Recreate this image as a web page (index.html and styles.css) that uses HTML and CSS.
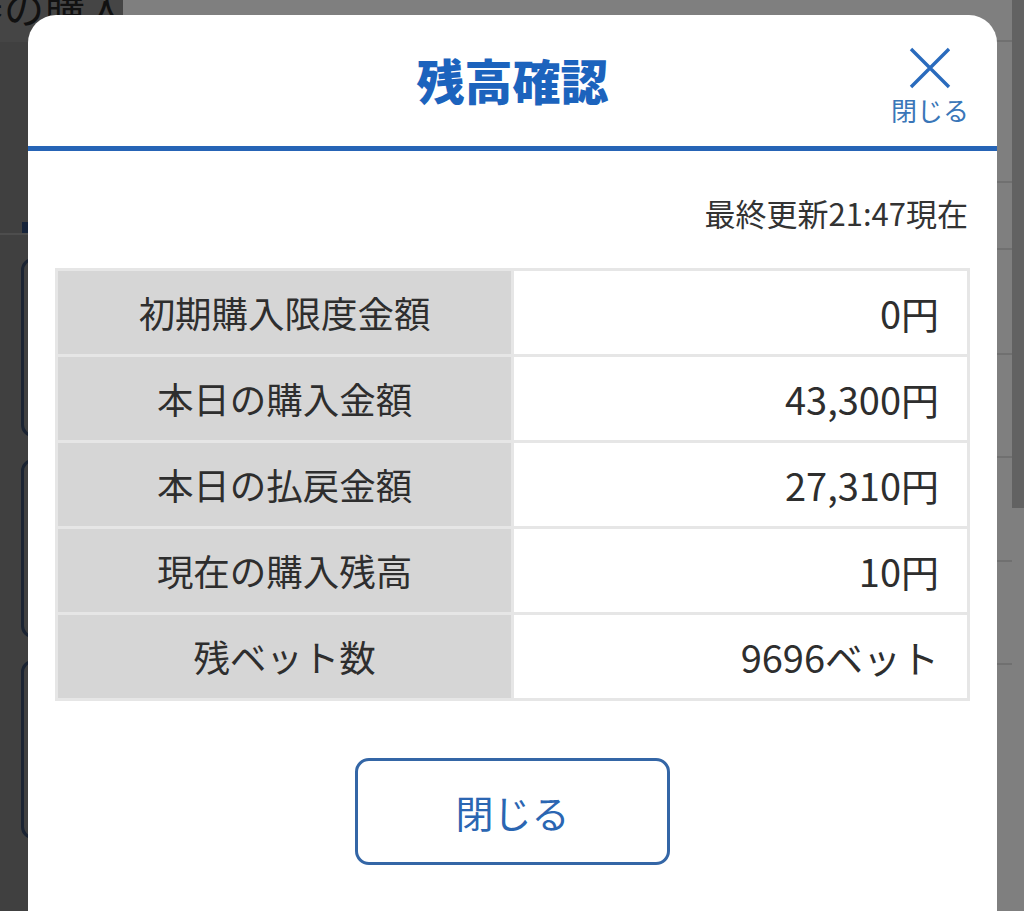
FILE: index.html
```html
<!DOCTYPE html>
<html lang="ja">
<head>
<meta charset="utf-8">
<title>残高確認</title>
<link rel="stylesheet" href="styles.css">
</head>
<body>
<div class="page">
  <div class="crumb"><span class="crumb-text">券の購入</span></div>
  <div class="left-strip">
    <div class="strip-mark"></div>
    <div class="strip-line"></div>
    <div class="strip-card"></div>
    <div class="strip-card"></div>
    <div class="strip-card"></div>
  </div>
  <div class="right-strip">
    <div class="rs-lines">
      <div class="rs-row rs-h42"></div>
      <div class="rs-row rs-h139"></div>
      <div class="rs-row rs-h65"></div>
      <div class="rs-row rs-h103"></div>
      <div class="rs-row rs-h101"></div>
      <div class="rs-row rs-h102"></div>
      <div class="rs-row rs-h101"></div>
    </div>
    <div class="rs-dark"></div>
  </div>
</div>

<div class="modal" role="dialog" aria-labelledby="modal-title">
  <div class="modal-header">
    <h1 class="modal-title" id="modal-title">残高確認</h1>
    <button class="close-x" type="button">
      <svg class="close-icon" width="44" height="42" viewBox="0 0 44 42" aria-hidden="true">
        <path d="M3 2 L41 40 M41 2 L3 40" stroke="currentColor" stroke-width="3.4" fill="none" stroke-linecap="butt"/>
      </svg>
      <span class="close-label">閉じる</span>
    </button>
  </div>
  <div class="modal-body">
    <p class="updated">最終更新21:47現在</p>
    <table class="balance">
      <tr><th>初期購入限度金額</th><td>0円</td></tr>
      <tr><th>本日の購入金額</th><td>43,300円</td></tr>
      <tr><th>本日の払戻金額</th><td>27,310円</td></tr>
      <tr><th>現在の購入残高</th><td>10円</td></tr>
      <tr><th>残ベット数</th><td>9696ベット</td></tr>
    </table>
    <button class="close-btn" type="button">閉じる</button>
  </div>
</div>
</body>
</html>
```

FILE: styles.css
```css
html, body {
  margin: 0;
  padding: 0;
  height: 100%;
  overflow: hidden;
}
body {
  background: #7f7f7f;
  font-family: "Noto Sans CJK JP", "Noto Sans", sans-serif;
  color: #333;
}

/* dimmed page underneath */
.page {
  display: grid;
  grid-template-columns: 28px 95px 1fr 27px;
  grid-template-rows: 42px 1fr;
  height: 911px;
}
.crumb {
  grid-column: 1 / 3;
  grid-row: 1;
  background: #454545;
  overflow: hidden;
  white-space: nowrap;
}
.crumb-text {
  display: block;
  margin-left: -37px;
  margin-top: -13px;
  font-size: 40px;
  line-height: 40px;
  color: #111;
  letter-spacing: 1px;
}
.left-strip {
  grid-column: 1;
  grid-row: 2;
  background: #404040;
  overflow: hidden;
  display: flex;
  flex-direction: column;
  padding-top: 180px;
}
.strip-mark {
  margin-left: 22px;
  width: 8px;
  height: 11px;
  background: #17243a;
}
.strip-line {
  height: 2px;
  background: #4d4d4d;
  margin-bottom: 23px;
}
.strip-card {
  margin-left: 21px;
  width: 30px;
  height: 173px;
  border: 3px solid #1a2332;
  border-radius: 12px;
  margin-bottom: 22px;
  flex: none;
}
.right-strip {
  grid-column: 4;
  grid-row: 1 / 3;
  display: flex;
  align-items: flex-start;
}
.rs-lines {
  flex: 1;
  display: flex;
  flex-direction: column;
}
.rs-row { border-bottom: 2px solid #707070; }
.rs-h42 { height: 40px; }
.rs-h139 { height: 139px; }
.rs-h65 { height: 65px; }
.rs-h103 { height: 103px; }
.rs-h101 { height: 101px; }
.rs-h102 { height: 102px; }
.rs-dark {
  width: 12px;
  height: 508px;
  background: #626262;
}

/* modal */
.modal {
  position: fixed;
  left: 28px;
  top: 15px;
  width: 969px;
  bottom: -40px;
  background: #fff;
  border-radius: 28px 28px 0 0;
}
.modal-header {
  display: grid;
  grid-template-columns: 1fr auto 1fr;
  align-items: center;
  height: 131px;
  border-bottom: 5px solid #2664b6;
}
.modal-title {
  grid-column: 2;
  margin: 0;
  padding-bottom: 4px;
  font-size: 48px;
  line-height: 1;
  font-weight: 900;
  color: #1c63bd;
}
.close-x {
  grid-column: 3;
  justify-self: end;
  margin-right: 28px;
  margin-top: 8px;
  padding: 0;
  border: 0;
  background: none;
  color: #2a6bbd;
  display: flex;
  flex-direction: column;
  align-items: center;
  gap: 8px;
  font-family: inherit;
}
.close-icon { display: block; }
.close-label {
  font-size: 26px;
  line-height: 26px;
  color: #3a76b8;
}
.modal-body {
  display: flex;
  flex-direction: column;
  padding: 0 27px;
}
.updated {
  margin: 46px 2px 0 0;
  text-align: right;
  font-size: 31px;
  line-height: 32px;
  color: #333;
}
.balance {
  margin-top: 39px;
  width: 100%;
  border-collapse: collapse;
  border: 3px solid #e3e3e3;
  table-layout: fixed;
}
.balance th,
.balance td {
  height: 83px;
  padding: 0;
  border: 3px solid #e6e6e6;
  font-size: 38px;
  font-weight: 400;
  color: #2e2e2e;
  line-height: 1.2;
}
.balance th {
  background: #d6d6d6;
  text-align: center;
  width: 49.7%;
  font-size: 36.5px;
}
.balance td {
  background: #fff;
  text-align: right;
  padding-right: 28px;
}
.close-btn {
  align-self: center;
  margin-top: 57px;
  width: 315px;
  height: 107px;
  border: 3px solid #3466a6;
  border-radius: 14px;
  background: #fff;
  font-family: inherit;
  font-size: 38px;
  color: #2b66b2;
  padding: 0;
}
```
